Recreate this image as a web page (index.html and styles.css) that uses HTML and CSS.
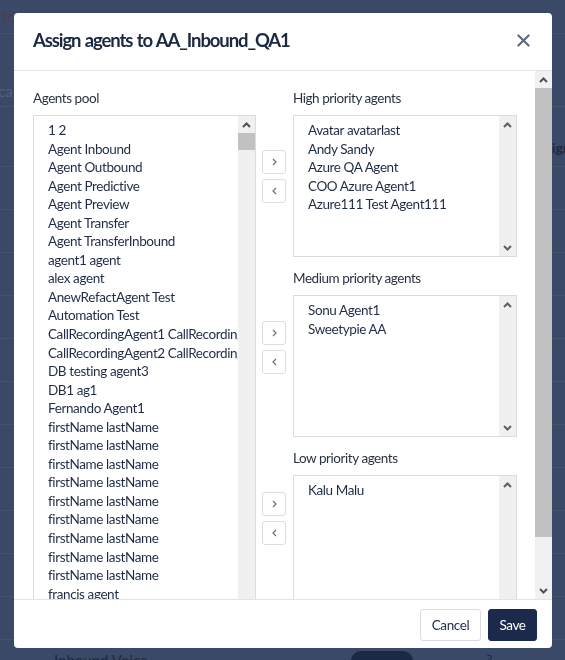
FILE: index.html
```html
<!DOCTYPE html>
<html lang="en">
<head>
<meta charset="utf-8">
<title>Assign agents</title>
<link rel="stylesheet" href="styles.css">
</head>
<body>
<div class="bg-page">
  <div class="bg-top"><span class="bg-crumb">Routes to</span></div>
  <div class="bg-row bg-row-tall"><span class="bg-faint">ca</span></div>
  <div class="bg-row bg-row-head"><span class="bg-head">Assigned</span></div>
  <div class="bg-row"></div>
  <div class="bg-row"></div>
  <div class="bg-row"></div>
  <div class="bg-row"></div>
  <div class="bg-row"></div>
  <div class="bg-row"></div>
  <div class="bg-row"></div>
  <div class="bg-row"></div>
  <div class="bg-row"></div>
  <div class="bg-row"></div>
  <div class="bg-row"></div>
  <div class="bg-row bg-last"><span class="bg-name">Inbound Voice</span><span class="bg-pill"></span><span class="bg-q">?</span></div>
</div>

<div class="modal">
  <div class="modal-header">
    <h1 class="modal-title">Assign agents to AA_Inbound_QA1</h1>
    <button class="close-btn" aria-label="Close">
      <svg width="14" height="14" viewBox="0 0 14 14"><path d="M1.5 1.5 L12.5 12.5 M12.5 1.5 L1.5 12.5" stroke="#5d6a7e" stroke-width="2.3" stroke-linecap="round"/></svg>
    </button>
  </div>

  <div class="modal-body">
    <div class="body-content">
      <div class="pool-col">
        <div class="field-label">Agents pool</div>
        <div class="listbox pool-box">
          <div class="list-items">
            <div class="item">1 2</div>
            <div class="item">Agent Inbound</div>
            <div class="item">Agent Outbound</div>
            <div class="item">Agent Predictive</div>
            <div class="item">Agent Preview</div>
            <div class="item">Agent Transfer</div>
            <div class="item">Agent TransferInbound</div>
            <div class="item">agent1 agent</div>
            <div class="item">alex agent</div>
            <div class="item">AnewRefactAgent Test</div>
            <div class="item">Automation Test</div>
            <div class="item">CallRecordingAgent1 CallRecordingAgent1</div>
            <div class="item">CallRecordingAgent2 CallRecordingAgent2</div>
            <div class="item">DB testing agent3</div>
            <div class="item">DB1 ag1</div>
            <div class="item">Fernando Agent1</div>
            <div class="item">firstName lastName</div>
            <div class="item">firstName lastName</div>
            <div class="item">firstName lastName</div>
            <div class="item">firstName lastName</div>
            <div class="item">firstName lastName</div>
            <div class="item">firstName lastName</div>
            <div class="item">firstName lastName</div>
            <div class="item">firstName lastName</div>
            <div class="item">firstName lastName</div>
            <div class="item">francis agent</div>
            <div class="item">Gary Agent</div>
            <div class="item">George Agent</div>
          </div>
          <div class="sbar">
            <div class="sbar-btn"><svg width="9" height="6" viewBox="0 0 9 6"><path d="M1 5 L4.5 1.5 L8 5" stroke="#505050" stroke-width="2" fill="none"/></svg></div>
            <div class="sbar-thumb small-thumb"></div>
            <div class="sbar-track"></div>
          </div>
        </div>
      </div>

      <div class="move-col">
        <div class="move-pair">
          <button class="move-btn"><svg width="5" height="8" viewBox="0 0 5 8"><path d="M1 1 L4 4 L1 7" stroke="#707070" stroke-width="1.2" fill="none"/></svg></button>
          <button class="move-btn"><svg width="5" height="8" viewBox="0 0 5 8"><path d="M4 1 L1 4 L4 7" stroke="#707070" stroke-width="1.2" fill="none"/></svg></button>
        </div>
        <div class="move-pair">
          <button class="move-btn"><svg width="5" height="8" viewBox="0 0 5 8"><path d="M1 1 L4 4 L1 7" stroke="#707070" stroke-width="1.2" fill="none"/></svg></button>
          <button class="move-btn"><svg width="5" height="8" viewBox="0 0 5 8"><path d="M4 1 L1 4 L4 7" stroke="#707070" stroke-width="1.2" fill="none"/></svg></button>
        </div>
        <div class="move-pair">
          <button class="move-btn"><svg width="5" height="8" viewBox="0 0 5 8"><path d="M1 1 L4 4 L1 7" stroke="#707070" stroke-width="1.2" fill="none"/></svg></button>
          <button class="move-btn"><svg width="5" height="8" viewBox="0 0 5 8"><path d="M4 1 L1 4 L4 7" stroke="#707070" stroke-width="1.2" fill="none"/></svg></button>
        </div>
      </div>

      <div class="prio-col">
        <div class="prio-group">
          <div class="field-label">High priority agents</div>
          <div class="listbox prio-box">
            <div class="list-items">
              <div class="item">Avatar avatarlast</div>
              <div class="item">Andy Sandy</div>
              <div class="item">Azure QA Agent</div>
              <div class="item">COO Azure Agent1</div>
              <div class="item">Azure111 Test Agent111</div>
            </div>
            <div class="sbar">
              <div class="sbar-btn"><svg width="9" height="6" viewBox="0 0 9 6"><path d="M1 5 L4.5 1.5 L8 5" stroke="#606060" stroke-width="2" fill="none"/></svg></div>
              <div class="sbar-track"></div>
              <div class="sbar-btn"><svg width="9" height="6" viewBox="0 0 9 6"><path d="M1 1 L4.5 4.5 L8 1" stroke="#606060" stroke-width="2" fill="none"/></svg></div>
            </div>
          </div>
        </div>
        <div class="prio-group">
          <div class="field-label">Medium priority agents</div>
          <div class="listbox prio-box">
            <div class="list-items">
              <div class="item">Sonu Agent1</div>
              <div class="item">Sweetypie AA</div>
            </div>
            <div class="sbar">
              <div class="sbar-btn"><svg width="9" height="6" viewBox="0 0 9 6"><path d="M1 5 L4.5 1.5 L8 5" stroke="#606060" stroke-width="2" fill="none"/></svg></div>
              <div class="sbar-track"></div>
              <div class="sbar-btn"><svg width="9" height="6" viewBox="0 0 9 6"><path d="M1 1 L4.5 4.5 L8 1" stroke="#606060" stroke-width="2" fill="none"/></svg></div>
            </div>
          </div>
        </div>
        <div class="prio-group">
          <div class="field-label">Low priority agents</div>
          <div class="listbox prio-box">
            <div class="list-items">
              <div class="item">Kalu Malu</div>
            </div>
            <div class="sbar">
              <div class="sbar-btn"><svg width="9" height="6" viewBox="0 0 9 6"><path d="M1 5 L4.5 1.5 L8 5" stroke="#606060" stroke-width="2" fill="none"/></svg></div>
              <div class="sbar-track"></div>
              <div class="sbar-btn"><svg width="9" height="6" viewBox="0 0 9 6"><path d="M1 1 L4.5 4.5 L8 1" stroke="#606060" stroke-width="2" fill="none"/></svg></div>
            </div>
          </div>
        </div>
      </div>
    </div>

    <div class="sbar page-sbar">
      <div class="sbar-btn"><svg width="9" height="6" viewBox="0 0 9 6"><path d="M1 5 L4.5 1.5 L8 5" stroke="#505050" stroke-width="2" fill="none"/></svg></div>
      <div class="sbar-thumb page-thumb"></div>
      <div class="sbar-track"></div>
      <div class="sbar-btn"><svg width="9" height="6" viewBox="0 0 9 6"><path d="M1 1 L4.5 4.5 L8 1" stroke="#505050" stroke-width="2" fill="none"/></svg></div>
    </div>
  </div>

  <div class="modal-footer">
    <button class="btn btn-cancel">Cancel</button>
    <button class="btn btn-save">Save</button>
  </div>
</div>
</body>
</html>
```

FILE: styles.css
```css
* { box-sizing: border-box; }

html, body {
  margin: 0;
  padding: 0;
  height: 100%;
  overflow: hidden;
}

body {
  background: #3a4967;
  font-family: Lato, "Open Sans", Arial, sans-serif;
}

/* background page (under the modal overlay) */
.bg-page {
  width: 565px;
}
.bg-top {
  height: 34px;
  border-bottom: 1px solid #4a4f66;
  padding-top: 6px;
  overflow: hidden;
  white-space: nowrap;
}
.bg-crumb {
  display: inline-block;
  margin-left: -48px;
  font-weight: 700;
  font-size: 15px;
  color: #4a3f55;
}
.bg-row {
  height: 43px;
  border-bottom: 1px solid #45536f;
}
.bg-row-tall {
  height: 73px;
  padding-top: 47px;
}
.bg-faint {
  display: inline-block;
  font-size: 15px;
  color: #52607c;
  margin-left: -2px;
}
.bg-row-head {
  height: 60px;
  padding-top: 30px;
  white-space: nowrap;
  overflow: hidden;
}
.bg-head {
  display: inline-block;
  margin-left: 530px;
  font-weight: 700;
  font-size: 14px;
  color: #1d2840;
}
.bg-last {
  display: flex;
  align-items: flex-start;
  padding-top: 11px;
  border-bottom: none;
}
.bg-name {
  margin-left: 54px;
  width: 297px;
  font-size: 15px;
  color: #1e2a42;
}
.bg-pill {
  width: 62px;
  height: 20px;
  border-radius: 10px;
  background: #1c2944;
}
.bg-q {
  margin-left: 73px;
  color: #1e2a42;
  font-size: 14px;
}

/* modal */
.modal {
  position: fixed;
  top: 13px;
  left: 14px;
  width: 538px;
  height: 635px;
  background: #fff;
  border-radius: 4px;
  overflow: hidden;
  display: flex;
  flex-direction: column;
}

.modal-header {
  height: 58px;
  flex: 0 0 58px;
  border-bottom: 1px solid #e3e3e3;
  display: flex;
  align-items: center;
  justify-content: space-between;
  padding: 0 22px 3px 19px;
}
.modal-title {
  margin: 0;
  font-size: 18.5px;
  font-weight: 700;
  color: #1b2940;
  letter-spacing: -1.1px;
  word-spacing: 1px;
}
.close-btn {
  border: none;
  background: none;
  padding: 0;
  width: 13px;
  height: 13px;
  display: flex;
}
.close-btn svg { width: 13px; height: 13px; }

.modal-body {
  flex: 1 1 auto;
  display: flex;
  min-height: 0;
  overflow: hidden;
}
.body-content {
  flex: 1 1 auto;
  padding: 18px 18px 0 19px;
  display: flex;
  align-items: flex-start;
  overflow: hidden;
}

.field-label {
  height: 18px;
  line-height: 18px;
  font-size: 13.5px;
  letter-spacing: -0.45px;
  color: #2b3240;
  margin-bottom: 8px;
}

.pool-col { width: 223px; flex: 0 0 223px; }
.move-col { width: 24px; flex: 0 0 24px; margin: 0 7px 0 6px; padding-top: 61px; display: flex; flex-direction: column; }
.prio-col { width: 224px; flex: 0 0 224px; }

.listbox {
  border: 1px solid #dcdcdc;
  display: flex;
  overflow: hidden;
  background: #fff;
}
.pool-box { height: 540px; }
.prio-box { height: 142px; }

.prio-group + .prio-group { margin-top: 12px; }

.list-items {
  flex: 1 1 auto;
  min-width: 0;
  padding: 5px 0 0 14px;
  overflow: hidden;
}
.item {
  font-size: 13.5px;
  letter-spacing: -0.4px;
  line-height: 18.56px;
  height: 18.56px;
  color: #1f2c47;
  white-space: nowrap;
  overflow: hidden;
}

/* scrollbars */
.sbar {
  width: 17px;
  flex: 0 0 17px;
  background: #f0f0f0;
  display: flex;
  flex-direction: column;
}
.sbar-btn {
  height: 17px;
  flex: 0 0 17px;
  display: flex;
  align-items: center;
  justify-content: center;
}
.sbar-track { flex: 1 1 auto; }
.sbar-thumb { background: #c1c1c1; }
.small-thumb { height: 17px; flex: 0 0 17px; }
.page-sbar { background: #f1f1f1; }
.page-thumb { height: 449px; flex: 0 0 449px; margin: 0; }

/* move buttons */
.move-pair { display: flex; flex-direction: column; gap: 5px; }
.move-pair + .move-pair { margin-top: 118px; }
.move-btn {
  width: 24px;
  height: 24px;
  padding: 0;
  border: 1px solid #dedede;
  border-radius: 3px;
  background: #fff;
  display: flex;
  align-items: center;
  justify-content: center;
}

/* footer */
.modal-footer {
  flex: 0 0 49px;
  border-top: 1px solid #e3e3e3;
  display: flex;
  justify-content: flex-end;
  align-items: flex-start;
  gap: 7px;
  padding: 9px 15px 0 0;
}
.btn {
  height: 32px;
  border-radius: 3px;
  font-family: Lato, "Open Sans", Arial, sans-serif;
  font-size: 13.5px;
  letter-spacing: -0.4px;
  padding: 0;
}
.btn-cancel {
  width: 61px;
  border: 1px solid #dcdcdc;
  background: #fff;
  color: #1f2c47;
}
.btn-save {
  width: 49px;
  border: 1px solid #1b2a4a;
  background: #1b2a4a;
  color: #fff;
}
```
